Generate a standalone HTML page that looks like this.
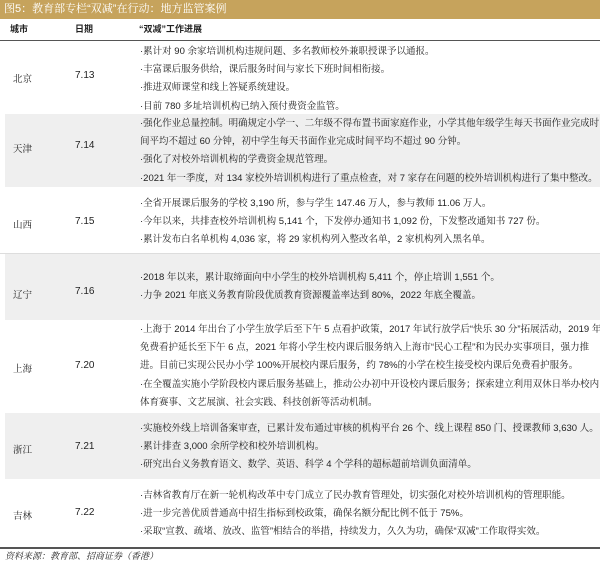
<!DOCTYPE html>
<html><head><meta charset="utf-8"><style>
*{margin:0;padding:0;box-sizing:border-box}
body{width:600px;height:565px;background:#fff;font-family:"Liberation Sans","Noto Serif CJK SC","Noto Sans CJK SC",serif;color:#222;position:relative;overflow:hidden;font-size:9.5px}
.title{position:absolute;left:0;top:0;width:600px;height:19px;background:#c6a35c;color:#fff;font-size:11px;line-height:19px;padding-left:4px;white-space:nowrap}
.hdr{position:absolute;top:22px;font-weight:bold;font-size:9px;line-height:14px;font-family:"Liberation Sans","Noto Sans CJK SC",sans-serif}
.hl{position:absolute;left:0;width:600px;height:1px;background:#555}
.row{position:absolute;left:5px;width:595px}
.g{background:#efefef}
.c{position:absolute;left:8px;font-size:9.5px}
.d{position:absolute;left:70px;font-size:10px;font-family:"Liberation Sans",sans-serif}
.t{position:absolute;left:135px;white-space:nowrap;line-height:18px;font-size:9.5px}
.t div{height:18.2px}
.src{position:absolute;left:5px;top:549px;font-size:9px;font-style:italic;line-height:14px}
</style></head><body>
<div class="title">图5：教育部专栏“双减”在行动：地方监管案例</div>
<div class="hdr" style="left:10px">城市</div>
<div class="hdr" style="left:75px">日期</div>
<div class="hdr" style="left:139px">“双减”工作进展</div>
<div class="hl" style="top:40px"></div>

<div class="row" style="top:41px;height:72px">
<div class="c" style="top:30px">北京</div><div class="d" style="top:29px">7.13</div>
<div class="t" style="top:2px"><div>·累计对 90 余家培训机构违规问题、多名教师校外兼职授课予以通报。</div><div>·丰富课后服务供给，课后服务时间与家长下班时间相衔接。</div><div>·推进双师课堂和线上答疑系统建设。</div><div>·目前 780 多址培训机构已纳入预付费资金监管。</div></div></div>

<div class="row g" style="top:114px;height:73px">
<div class="c" style="top:27px">天津</div><div class="d" style="top:26px">7.14</div>
<div class="t" style="top:1px"><div>·强化作业总量控制。明确规定小学一、二年级不得布置书面家庭作业，小学其他年级学生每天书面作业完成时</div><div>间平均不超过 60 分钟，初中学生每天书面作业完成时间平均不超过 90 分钟。</div><div>·强化了对校外培训机构的学费资金规范管理。</div><div>·2021 年一季度，对 134 家校外培训机构进行了重点检查，对 7 家存在问题的校外培训机构进行了集中整改。</div></div></div>

<div class="row" style="top:187px;height:66px">
<div class="c" style="top:30px">山西</div><div class="d" style="top:29px">7.15</div>
<div class="t" style="top:8px"><div>·全省开展课后服务的学校 3,190 所，参与学生 147.46 万人，参与教师 11.06 万人。</div><div>·今年以来，共排查校外培训机构 5,141 个，下发停办通知书 1,092 份，下发整改通知书 727 份。</div><div>·累计发布白名单机构 4,036 家，将 29 家机构列入整改名单，2 家机构列入黑名单。</div></div></div>
<div class="hl" style="top:253px;background:#ddd"></div>

<div class="row g" style="top:254px;height:66px">
<div class="c" style="top:33px">辽宁</div><div class="d" style="top:32px">7.16</div>
<div class="t" style="top:15px"><div>·2018 年以来，累计取缔面向中小学生的校外培训机构 5,411 个，停止培训 1,551 个。</div><div>·力争 2021 年底义务教育阶段优质教育资源覆盖率达到 80%，2022 年底全覆盖。</div></div></div>

<div class="row" style="top:320px;height:93px">
<div class="c" style="top:41px">上海</div><div class="d" style="top:40px">7.20</div>
<div class="t" style="top:1px"><div>·上海于 2014 年出台了小学生放学后至下午 5 点看护政策，2017 年试行放学后“快乐 30 分”拓展活动，2019 年</div><div>免费看护延长至下午 6 点，2021 年将小学生校内课后服务纳入上海市“民心工程”和为民办实事项目，强力推</div><div>进。目前已实现公民办小学 100%开展校内课后服务，约 78%的小学在校生接受校内课后免费看护服务。</div><div>·在全覆盖实施小学阶段校内课后服务基础上，推动公办初中开设校内课后服务；探索建立利用双休日举办校内</div><div>体育赛事、文艺展演、社会实践、科技创新等活动机制。</div></div></div>

<div class="row g" style="top:413px;height:66px">
<div class="c" style="top:29px">浙江</div><div class="d" style="top:28px">7.21</div>
<div class="t" style="top:7px"><div>·实施校外线上培训备案审查，已累计发布通过审核的机构平台 26 个、线上课程 850 门、授课教师 3,630 人。</div><div>·累计排查 3,000 余所学校和校外培训机构。</div><div>·研究出台义务教育语文、数学、英语、科学 4 个学科的超标超前培训负面清单。</div></div></div>

<div class="row" style="top:479px;height:68px">
<div class="c" style="top:29px">吉林</div><div class="d" style="top:28px">7.22</div>
<div class="t" style="top:8px"><div>·吉林省教育厅在新一轮机构改革中专门成立了民办教育管理处，切实强化对校外培训机构的管理职能。</div><div>·进一步完善优质普通高中招生指标到校政策，确保名额分配比例不低于 75%。</div><div>·采取“宣教、疏堵、放改、监管”相结合的举措，持续发力，久久为功，确保“双减”工作取得实效。</div></div></div>
<div class="hl" style="top:547px;height:1.5px"></div>
<div class="src">资料来源：教育部、招商证券（香港）</div>
</body></html>
